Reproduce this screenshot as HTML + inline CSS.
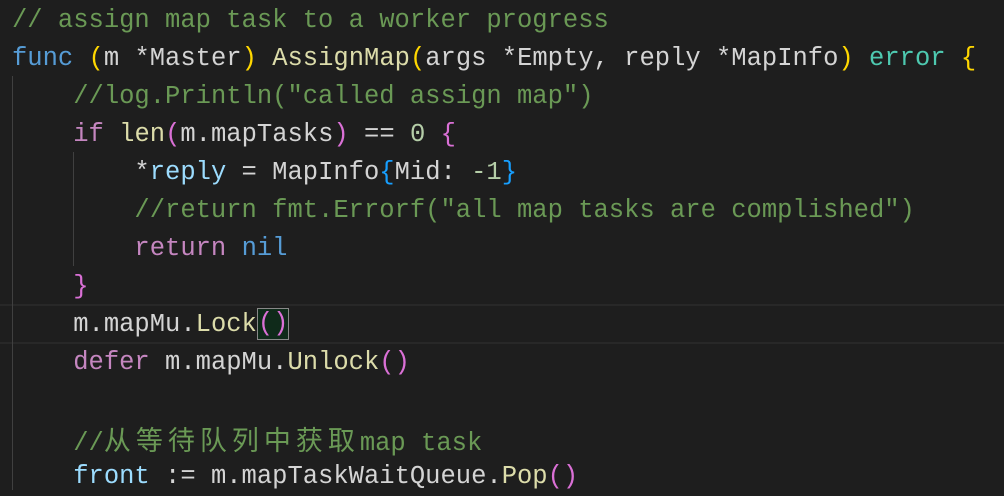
<!DOCTYPE html>
<html><head><meta charset="utf-8"><style>
html,body{margin:0;padding:0;background:#1e1e1e;width:1004px;height:490px;overflow:hidden}
.l{position:absolute;left:12px;height:38px;line-height:38px;white-space:pre;font-family:"Liberation Mono","Noto Sans CJK SC",monospace;font-size:25.5px;color:#d4d4d4;margin-top:2px}
.c{color:#6a9955}.k{color:#569cd6}.p{color:#c586c0}.f{color:#dcdcaa}.v{color:#9cdcfe}.t{color:#4ec9b0}.n{color:#b5cea8}
.y{color:#ffd700}.m{color:#da70d6}.b{color:#179fff}
.cj{font-family:"Noto Sans CJK SC",sans-serif;font-size:27px;letter-spacing:5px}
.g{position:absolute;width:1px;background:#404040}
.hl{position:absolute;left:0;top:304px;width:1004px;height:36px;border-top:2px solid #282828;border-bottom:2px solid #282828}
.br{display:inline-block;border:1px solid #888;background:#0f2a1a;box-sizing:border-box;height:32px;vertical-align:middle;line-height:30px}
</style></head><body>
<div class="hl"></div>
<div class="g" style="left:12px;top:76px;height:414px"></div>
<div class="g" style="left:73px;top:152px;height:114px"></div>
<div class="l" style="top:0"><span class="c">// assign map task to a worker progress</span></div>
<div class="l" style="top:38px"><span class="k">func</span> <span class="y">(</span>m *Master<span class="y">)</span> <span class="f">AssignMap</span><span class="y">(</span>args *Empty, reply *MapInfo<span class="y">)</span> <span class="t">error</span> <span class="y">{</span></div>
<div class="l" style="top:76px">    <span class="c">//log.Println("called assign map")</span></div>
<div class="l" style="top:114px">    <span class="p">if</span> <span class="f">len</span><span class="m">(</span>m.mapTasks<span class="m">)</span> == <span class="n">0</span> <span class="m">{</span></div>
<div class="l" style="top:152px">        *<span class="v">reply</span> = MapInfo<span class="b">{</span>Mid: <span class="n">-1</span><span class="b">}</span></div>
<div class="l" style="top:190px">        <span class="c">//return fmt.Errorf("all map tasks are complished")</span></div>
<div class="l" style="top:228px">        <span class="p">return</span> <span class="k">nil</span></div>
<div class="l" style="top:266px">    <span class="m">}</span></div>
<div class="l" style="top:304px">    m.mapMu.<span class="f">Lock</span><span class="br"><span class="m">()</span></span></div>
<div class="l" style="top:342px">    <span class="p">defer</span> m.mapMu.<span class="f">Unlock</span><span class="m">()</span></div>
<div class="l" style="top:418px">    <span class="c">//<span class="cj">从等待队列中获取</span>map task</span></div>
<div class="l" style="top:456px">    <span class="v">front</span> := m.mapTaskWaitQueue.<span class="f">Pop</span><span class="m">()</span></div>
</body></html>
